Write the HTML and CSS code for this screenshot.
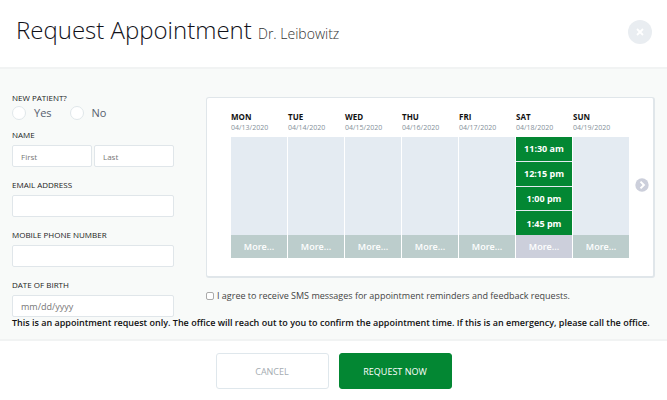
FILE: index.html
```html
<!DOCTYPE html>
<html lang="en">
<head>
    <meta charset="utf-8">
    <title>Request Appointment</title>
    <link rel="stylesheet" href="styles.css">
</head>
<body>
    <form class="modal">
        <header class="modal-header">
            <h1>Request Appointment <small>Dr. Leibowitz</small></h1>
            <button type="button" class="close" aria-label="Close">
                <svg width="8" height="8" viewBox="0 0 8 8"><path d="M1 1l6 6M7 1L1 7" stroke="#fff" stroke-width="1.8"/></svg>
            </button>
        </header>

        <main class="modal-body">
            <div class="columns">
                <div class="patient">
                    <fieldset class="field">
                        <legend>NEW PATIENT?</legend>
                        <div class="radios">
                            <label><input type="radio" name="new-patient" value="yes">Yes</label>
                            <label><input type="radio" name="new-patient" value="no">No</label>
                        </div>
                    </fieldset>
                    <div class="field">
                        <label for="first">NAME</label>
                        <div class="names">
                            <input type="text" id="first" placeholder="First">
                            <input type="text" id="last" placeholder="Last" aria-label="Last name">
                        </div>
                    </div>
                    <div class="field">
                        <label for="email">EMAIL ADDRESS</label>
                        <input type="email" id="email">
                    </div>
                    <div class="field">
                        <label for="phone">MOBILE PHONE NUMBER</label>
                        <input type="tel" id="phone">
                    </div>
                    <div class="field">
                        <label for="dob">DATE OF BIRTH</label>
                        <input type="text" id="dob" class="dob" placeholder="mm/dd/yyyy">
                    </div>
                </div>

                <div class="schedule">
                    <div class="calendar">
                        <div class="week">
                            <div class="day">
                                <h2>MON</h2>
                                <p class="date">04/13/2020</p>
                                <div class="slots"></div>
                                <button type="button" class="more">More...</button>
                            </div>
                            <div class="day">
                                <h2>TUE</h2>
                                <p class="date">04/14/2020</p>
                                <div class="slots"></div>
                                <button type="button" class="more">More...</button>
                            </div>
                            <div class="day">
                                <h2>WED</h2>
                                <p class="date">04/15/2020</p>
                                <div class="slots"></div>
                                <button type="button" class="more">More...</button>
                            </div>
                            <div class="day">
                                <h2>THU</h2>
                                <p class="date">04/16/2020</p>
                                <div class="slots"></div>
                                <button type="button" class="more">More...</button>
                            </div>
                            <div class="day">
                                <h2>FRI</h2>
                                <p class="date">04/17/2020</p>
                                <div class="slots"></div>
                                <button type="button" class="more">More...</button>
                            </div>
                            <div class="day">
                                <h2>SAT</h2>
                                <p class="date">04/18/2020</p>
                                <div class="slots">
                                    <button type="button" class="slot">11:30 am</button>
                                    <button type="button" class="slot">12:15 pm</button>
                                    <button type="button" class="slot">1:00 pm</button>
                                    <button type="button" class="slot">1:45 pm</button>
                                </div>
                                <button type="button" class="more more-active">More...</button>
                            </div>
                            <div class="day">
                                <h2>SUN</h2>
                                <p class="date">04/19/2020</p>
                                <div class="slots"></div>
                                <button type="button" class="more">More...</button>
                            </div>
                        </div>
                        <button type="button" class="next" aria-label="Next week">
                            <svg width="14" height="14" viewBox="0 0 14 14"><circle cx="7" cy="7" r="6.7" fill="#cccfdb"/><path d="M5.5 3.6L8.9 7l-3.4 3.4" fill="none" stroke="#fff" stroke-width="2"/></svg>
                        </button>
                    </div>
                    <label class="consent"><input type="checkbox">I agree to receive SMS messages for appointment reminders and feedback requests.</label>
                </div>
            </div>
            <p class="notice">This is an appointment request only. The office will reach out to you to confirm the appointment time. If this is an emergency, please call the office.</p>
        </main>

        <footer class="modal-footer">
            <button type="button" class="btn">CANCEL</button>
            <button type="submit" class="btn btn-primary">REQUEST NOW</button>
        </footer>
    </form>
</body>
</html>
```
FILE: styles.css
```css
* {
    box-sizing: border-box;
}
body {
    margin: 0;
    font-family: "Open Sans", sans-serif;
    font-size: 9px;
    color: #222;
    background: #fff;
}
h1, h2, p, fieldset, legend {
    margin: 0;
    padding: 0;
    border: none;
}
button, input {
    font-family: inherit;
    margin: 0;
}
button {
    padding: 0;
    border: none;
    cursor: pointer;
}
svg {
    display: block;
}

/* header */
.modal-header {
    display: flex;
    align-items: center;
    justify-content: space-between;
    padding: 12px 15px 15px 16px;
    border-bottom: 2px solid #f1f3f3;
}
.modal-header h1 {
    font-size: 24px;
    line-height: 36px;
    font-weight: 300;
    color: #111119;
}
.modal-header small {
    font-size: 14px;
    color: #333;
}
.close {
    display: flex;
    align-items: center;
    justify-content: center;
    width: 24px;
    height: 24px;
    border-radius: 50%;
    background: #e9edf1;
}

/* body */
.modal-body {
    padding: 21px 12px 10px;
    background: #f8faf9;
    border-bottom: 2px solid #f1f3f3;
}
.columns {
    display: flex;
    gap: 32px;
}
.patient {
    flex: 0 0 162px;
}
.field {
    margin-bottom: 10px;
}
.field:first-child {
    margin-bottom: 7px;
}
.field:last-child {
    margin-bottom: 0;
}
.field > label,
.field > legend {
    display: block;
    font-size: 8px;
    line-height: 16px;
    margin-bottom: 2px;
    font-weight: 500;
}
.field > legend {
    margin-bottom: 0;
}
.radios {
    display: flex;
    gap: 18px;
}
.radios label {
    display: flex;
    align-items: center;
    gap: 8px;
    font-size: 11px;
    line-height: 14px;
    color: #56606e;
}
.radios input {
    appearance: none;
    width: 14px;
    height: 14px;
    border: 1px solid #e0e7ea;
    border-radius: 50%;
    background: #fff;
}
.names {
    display: flex;
    gap: 2px;
}
.field input[type="text"],
.field input[type="email"],
.field input[type="tel"] {
    display: block;
    width: 100%;
    min-width: 0;
    height: 22px;
    padding: 0 8px;
    border: 1px solid #e0e6ea;
    border-radius: 2px;
    background: #fff;
    font-size: 8px;
}
.field input::placeholder {
    color: #777;
}
.field input.dob {
    font-size: 9px;
}

/* calendar */
.schedule {
    flex: 1;
    min-width: 0;
    padding-top: 7px;
}
.calendar {
    display: flex;
    align-items: center;
    padding: 13px 4px 18px 24px;
    border: 1px solid #e0e6ea;
    border-right-width: 2px;
    border-bottom-width: 2px;
    border-radius: 3px;
    background: #fff;
}
.week {
    flex: 1;
    display: grid;
    grid-template-columns: repeat(7, 1fr);
    gap: 1px;
}
.day h2 {
    font-size: 8px;
    line-height: 12px;
    font-weight: 700;
    color: #111;
}
.date {
    font-size: 7px;
    line-height: 9px;
    margin-bottom: 5px;
    color: #84909a;
}
.slots {
    display: grid;
    grid-template-rows: repeat(4, 1fr);
    gap: 1px;
    height: 98px;
    background: #e4ebf2;
}
.slot {
    background: #038733;
    color: #fff;
    font-size: 9px;
    font-weight: 700;
}
.more {
    display: block;
    width: 100%;
    height: 23px;
    background: #bccdcc;
    color: #fff;
    font-size: 9px;
    font-weight: 600;
}
.more-active {
    background: #cccfdb;
}
.next {
    margin-left: 6px;
    background: none;
}
.consent {
    display: flex;
    align-items: center;
    gap: 3px;
    margin-top: 11px;
    line-height: 14px;
    color: #444;
}
.consent input {
    appearance: none;
    width: 8px;
    height: 8px;
    border: 1px solid #aaa;
    border-radius: 2px;
    background: #fff;
}
.notice {
    line-height: 12px;
    font-weight: 600;
    color: #111;
}

/* footer */
.modal-footer {
    display: flex;
    justify-content: center;
    gap: 10px;
    padding: 12px;
}
.btn {
    width: 113px;
    height: 36px;
    border: 1px solid #dfe7ec;
    border-radius: 3px;
    background: #fff;
    color: #a4abb1;
    font-size: 9px;
}
.btn-primary {
    border-color: #038733;
    background: #038733;
    color: #fff;
}
```
